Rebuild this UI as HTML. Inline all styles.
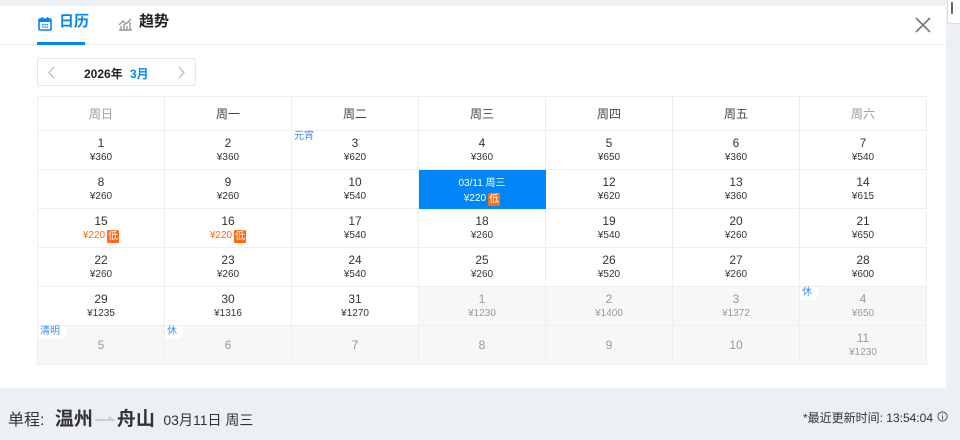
<!DOCTYPE html>
<html><head><meta charset="utf-8"><style>
*{margin:0;padding:0;box-sizing:border-box}
body{width:960px;height:440px;background:#eceff4;font-family:"Liberation Sans","Noto Sans CJK SC",sans-serif;position:relative;overflow:hidden;color:#333}
.panel{position:absolute;left:0;top:6px;width:946px;height:382px;background:#fff}
.tabbar{position:absolute;left:0;top:6px;width:946px;height:39px;border-bottom:1px solid #eee}
.tab{position:absolute;top:10px;font-size:15px;font-weight:bold}
.uline{position:absolute;left:37px;top:42px;width:48px;height:3px;background:#0086f6}
.close{position:absolute;left:914px;top:16px}
.sel{position:absolute;left:37px;top:58px;width:159px;height:28px;border:1px solid #e6e6e6;border-radius:3px;font-size:12px;font-weight:bold}
table{position:absolute;left:37px;top:96px;border-collapse:collapse;table-layout:fixed}
td{width:127px;height:39px;border:1px solid #eee;text-align:center;position:relative;vertical-align:top;padding-top:5px}
th{height:34px;border:1px solid #eee;font-weight:normal;font-size:12px;color:#444}
th.w{color:#999}
.n{font-size:12px;line-height:15px;display:block}
.p{font-size:10px;line-height:14px;display:block;color:#333}
td.g{background:#f7f7f7}
td.g .n,td.g .p{color:#999}
td.o{padding-top:12px}
td.s{background:#0086f6;border-color:#0086f6}
td.s .n,td.s .p{color:#fff;font-size:10px}
td.s .n{line-height:16px;margin-top:1px}
.low{display:inline-block;background:#ff6a13;color:#fff;font-size:10px;line-height:13px;padding:0 1px;margin-left:2px;border-radius:1px;vertical-align:-1px}
.or{color:#ff6a13!important}
.tag{position:absolute;left:0;top:0;background:#fff;color:#3a8ff0;font-size:10px;line-height:12px;padding:0 6px 1px 2px;border-radius:0 0 6px 0}
.bot{position:absolute;left:8px;top:404px;font-size:16px;color:#333}
</style></head><body>
<div class="panel"></div>
<div style="position:absolute;left:947px;top:0;width:13px;height:24px;background:#fff;border-radius:0 0 0 4px;border:1px solid #ddd;border-top:none;border-right:none"><div style="position:absolute;left:3px;top:2px;width:2px;height:12px;background:#666"></div></div>
<div class="tabbar"></div>
<svg style="position:absolute;left:38px;top:17px" width="14" height="14" viewBox="0 0 14 14"><rect x="1" y="2" width="12" height="11" rx="1" fill="none" stroke="#0086f6" stroke-width="1.6"/><rect x="1" y="2" width="12" height="3" fill="#0086f6"/><rect x="3.5" y="0" width="1.5" height="3" fill="#0086f6"/><rect x="9" y="0" width="1.5" height="3" fill="#0086f6"/><g fill="#0086f6"><rect x="4" y="7" width="1.5" height="1.3"/><rect x="6.3" y="7" width="1.5" height="1.3"/><rect x="8.6" y="7" width="1.5" height="1.3"/><rect x="4" y="9.5" width="1.5" height="1.3"/><rect x="6.3" y="9.5" width="1.5" height="1.3"/><rect x="8.6" y="9.5" width="1.5" height="1.3"/></g></svg>
<div class="tab" style="left:59px;color:#0086f6">日历</div>
<svg style="position:absolute;left:118px;top:17px" width="15" height="14" viewBox="0 0 15 14"><path d="M1 13h13M3 13V9M6 13V7M9 13V9M12 13V5M1 8l4-4 3 3 5-5" fill="none" stroke="#999" stroke-width="1.4"/></svg>
<div class="tab" style="left:139px;color:#222">趋势</div>
<div class="uline"></div>
<svg class="close" width="18" height="18" viewBox="0 0 18 18"><path d="M2 2L16 16M16 2L2 16" stroke="#777" stroke-width="1.6"/></svg>
<div class="sel">
<svg style="position:absolute;left:10px;top:7px" width="8" height="13"><path d="M6 1L1 6.5 6 12" fill="none" stroke="#bbb" stroke-width="1.3"/></svg>
<span style="position:absolute;left:46px;top:6px;color:#222">2026年</span><span style="position:absolute;left:92px;top:6px;color:#0086f6">3月</span>
<svg style="position:absolute;left:139px;top:7px" width="8" height="13"><path d="M2 1L7 6.5 2 12" fill="none" stroke="#bbb" stroke-width="1.3"/></svg>
</div>
<table>
<tr><th class="w">周日</th><th>周一</th><th>周二</th><th>周三</th><th>周四</th><th>周五</th><th class="w">周六</th></tr>
<tr><td><span class="n">1</span><span class="p">¥360</span></td><td><span class="n">2</span><span class="p">¥360</span></td><td><span class="tag">元宵</span><span class="n">3</span><span class="p">¥620</span></td><td><span class="n">4</span><span class="p">¥360</span></td><td><span class="n">5</span><span class="p">¥650</span></td><td><span class="n">6</span><span class="p">¥360</span></td><td><span class="n">7</span><span class="p">¥540</span></td></tr>
<tr><td><span class="n">8</span><span class="p">¥260</span></td><td><span class="n">9</span><span class="p">¥260</span></td><td><span class="n">10</span><span class="p">¥540</span></td><td class="s"><span class="n">03/11 周三</span><span class="p">¥220<span class="low">低</span></span></td><td><span class="n">12</span><span class="p">¥620</span></td><td><span class="n">13</span><span class="p">¥360</span></td><td><span class="n">14</span><span class="p">¥615</span></td></tr>
<tr><td><span class="n">15</span><span class="p or">¥220<span class="low">低</span></span></td><td><span class="n">16</span><span class="p or">¥220<span class="low">低</span></span></td><td><span class="n">17</span><span class="p">¥540</span></td><td><span class="n">18</span><span class="p">¥260</span></td><td><span class="n">19</span><span class="p">¥540</span></td><td><span class="n">20</span><span class="p">¥260</span></td><td><span class="n">21</span><span class="p">¥650</span></td></tr>
<tr><td><span class="n">22</span><span class="p">¥260</span></td><td><span class="n">23</span><span class="p">¥260</span></td><td><span class="n">24</span><span class="p">¥540</span></td><td><span class="n">25</span><span class="p">¥260</span></td><td><span class="n">26</span><span class="p">¥520</span></td><td><span class="n">27</span><span class="p">¥260</span></td><td><span class="n">28</span><span class="p">¥600</span></td></tr>
<tr><td><span class="n">29</span><span class="p">¥1235</span></td><td><span class="n">30</span><span class="p">¥1316</span></td><td><span class="n">31</span><span class="p">¥1270</span></td><td class="g"><span class="n">1</span><span class="p">¥1230</span></td><td class="g"><span class="n">2</span><span class="p">¥1400</span></td><td class="g"><span class="n">3</span><span class="p">¥1372</span></td><td class="g"><span class="tag">休</span><span class="n">4</span><span class="p">¥650</span></td></tr>
<tr><td class="g o"><span class="tag">清明</span><span class="n">5</span></td><td class="g o"><span class="tag">休</span><span class="n">6</span></td><td class="g o"><span class="n">7</span></td><td class="g o"><span class="n">8</span></td><td class="g o"><span class="n">9</span></td><td class="g o"><span class="n">10</span></td><td class="g"><span class="n">11</span><span class="p">¥1230</span></td></tr>
</table>
<div class="bot">单程: <b style="font-size:19px;margin-left:6px">温州</b><svg width="22" height="10" style="vertical-align:2px;margin:0 1px"><path d="M1 7h18l-4-3" fill="none" stroke="#ccc" stroke-width="2"/></svg><b style="font-size:19px">舟山</b> <span style="font-size:14px;margin-left:4px">03月11日 周三</span></div>
<div style="position:absolute;right:27px;top:409px;font-size:12px;color:#333;white-space:nowrap">*最近更新时间: 13:54:04</div>
<svg style="position:absolute;left:937px;top:411px" width="11" height="11" viewBox="0 0 11 11"><circle cx="5.5" cy="5.5" r="4.6" fill="none" stroke="#555"/><path d="M5.5 4.5v4M5.5 2.5v1" stroke="#555"/></svg>
</body></html>
